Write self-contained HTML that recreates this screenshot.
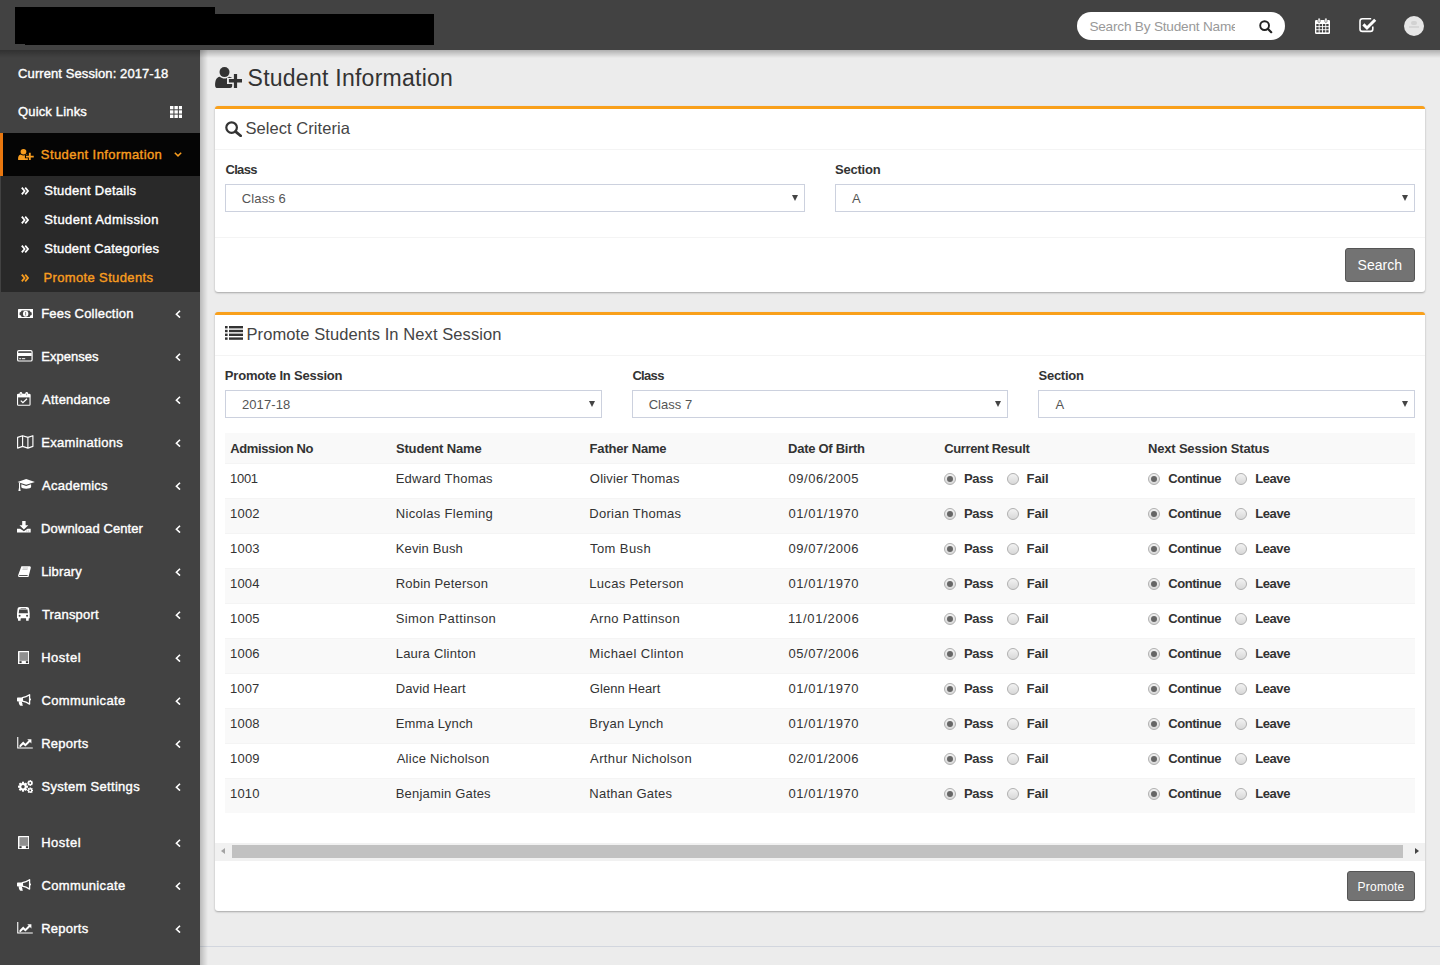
<!DOCTYPE html>
<html lang="en"><head><meta charset="utf-8"><title>Student Information</title>
<style>
*{box-sizing:border-box;margin:0;padding:0}
html,body{width:1440px;height:965px;overflow:hidden}
body{background:#ececec;font-family:"Liberation Sans",sans-serif;font-size:13px;color:#444;position:relative}
.abs{position:absolute}
#hdr{left:0;top:0;width:1440px;height:50px;background:#424242;z-index:5}
#hsh{left:0;top:50px;width:1440px;height:7.6px;background:linear-gradient(to bottom,rgba(0,0,0,.26),rgba(0,0,0,.13) 50%,rgba(0,0,0,0));z-index:6}
#side{left:0;top:50px;width:200px;height:915px;background:#424242;z-index:4}
#ssh{left:200px;top:50px;width:8.4px;height:915px;background:linear-gradient(to right,rgba(0,0,0,.21),rgba(0,0,0,.1) 50%,rgba(0,0,0,0));z-index:4}
.red{background:#000}
.st{color:#fff;font-weight:normal;-webkit-text-stroke:0.38px;font-size:13px;white-space:nowrap;line-height:16px}
.ic{position:absolute;left:18px}
.ic svg{position:absolute;left:0}
.box{background:#fff;border-top:3px solid #f9a01b;border-radius:3px;box-shadow:0 1px 2px rgba(0,0,0,.3)}
.bt{font-size:16.5px;color:#444;white-space:nowrap;line-height:22px}
.lbl{font-weight:bold;font-size:13px;color:#333;white-space:nowrap;line-height:16px}
.sel{height:28px;border:1px solid #ccd1de;background:#fff}
.sel span{position:absolute;font-size:13px;color:#555;line-height:16px;white-space:nowrap}
.sel i{position:absolute;right:6px;top:10px;width:0;height:0;border-left:3px solid transparent;border-right:3px solid transparent;border-top:6px solid #444}
.btn{background:#737373;border:1px solid #555;border-radius:3px;color:#fff;white-space:nowrap}
.btn span{position:absolute;white-space:nowrap}
.row{left:225px;width:1190px;height:35px}
.c{position:absolute;font-size:13px;line-height:16px;color:#333;white-space:nowrap}
.b{font-weight:bold}
.rd{position:absolute;top:9px;width:12px;height:12px;border-radius:50%;border:1px solid #b0b0b0;background:linear-gradient(#f2f2f2,#d8d8d8)}
.rd.on:after{content:"";position:absolute;left:2px;top:2px;width:6px;height:6px;border-radius:50%;background:#666}
</style></head><body>

<div id="hdr" class="abs">
<div class="abs red" style="left:15px;top:7px;width:200px;height:37px"></div><div class="abs red" style="left:25px;top:14px;width:409px;height:31px"></div>
<div class="abs" style="left:1077px;top:12px;width:208px;height:28px;border-radius:14px;background:#fff"><div class="abs" style="left:0;top:0;width:158px;height:28px;overflow:hidden"><span id="t1" class="abs" style="left:12.4px;top:7px;font-size:13.6px;letter-spacing:-0.2px;line-height:16px;color:#999;white-space:nowrap;">Search By Student Name</span></div><svg class="abs" style="left:182px;top:8px" width="14" height="14" viewBox="0 0 14 14"><circle cx="5.6" cy="5.6" r="4.4" fill="none" stroke="#222" stroke-width="1.9"/><path d="M8.8 8.8 L12.2 12.2" stroke="#222" stroke-width="2.2" stroke-linecap="round"/></svg></div>
<svg class="abs" style="left:1315px;top:18px" width="15" height="16" viewBox="0 0 15 16"><rect x="0" y="2" width="15" height="14" rx="1.2" fill="#fff"/><rect x="3" y="0" width="2.2" height="4.4" rx="1" fill="#fff" stroke="#424242" stroke-width=".6"/><rect x="9.8" y="0" width="2.2" height="4.4" rx="1" fill="#fff" stroke="#424242" stroke-width=".6"/><g fill="#424242"><rect x="1.3" y="6" width="2.4" height="2.2"/><rect x="4.6" y="6" width="2.4" height="2.2"/><rect x="7.9" y="6" width="2.4" height="2.2"/><rect x="11.2" y="6" width="2.4" height="2.2"/><rect x="1.3" y="9.1" width="2.4" height="2.2"/><rect x="4.6" y="9.1" width="2.4" height="2.2"/><rect x="7.9" y="9.1" width="2.4" height="2.2"/><rect x="11.2" y="9.1" width="2.4" height="2.2"/><rect x="1.3" y="12.2" width="2.4" height="2.2"/><rect x="4.6" y="12.2" width="2.4" height="2.2"/><rect x="7.9" y="12.2" width="2.4" height="2.2"/><rect x="11.2" y="12.2" width="2.4" height="2.2"/></g></svg>
<svg class="abs" style="left:1359px;top:17.4px" width="18" height="16" viewBox="0 0 18 16"><path d="M12.2 1.8 H3.4 C2 1.8 1 2.8 1 4.2 V12 C1 13.4 2 14.4 3.4 14.4 H11.4 C12.8 14.4 13.8 13.4 13.8 12 V9.6" fill="none" stroke="#fff" stroke-width="1.6"/><path d="M4.4 7.4 L8 11 L16.2 2.8" fill="none" stroke="#fff" stroke-width="3"/></svg>
<div class="abs" style="left:1404px;top:16px;width:20px;height:20px;border-radius:50%;background:#e6e6e6"><div class="abs" style="left:7px;top:5px;width:6px;height:4px;background:#d2d2d2;border-radius:2px"></div><div class="abs" style="left:5px;top:10px;width:10px;height:2px;background:#d6d6d6"></div></div>
</div>
<div id="hsh" class="abs"></div><div id="ssh" class="abs"></div>
<div id="side" class="abs">
<div id="t2" class="abs st" style="left:18px;top:16px;letter-spacing:0.092px;margin-left:0.09px;">Current Session: 2017-18</div>
<div id="t3" class="abs st" style="left:18px;top:54px;letter-spacing:0.160px;">Quick Links</div>
<svg class="abs" style="left:170px;top:56px" width="12.4" height="12" viewBox="0 0 12 12" preserveAspectRatio="none"><g fill="#fff"><rect x="0" y="0" width="3.3" height="3.3"/><rect x="4.3" y="0" width="3.3" height="3.3"/><rect x="8.6" y="0" width="3.4" height="3.3"/><rect x="0" y="4.3" width="3.3" height="3.3"/><rect x="4.3" y="4.3" width="3.3" height="3.3"/><rect x="8.6" y="4.3" width="3.4" height="3.3"/><rect x="0" y="8.6" width="3.3" height="3.4"/><rect x="4.3" y="8.6" width="3.3" height="3.4"/><rect x="8.6" y="8.6" width="3.4" height="3.4"/></g></svg>
<div class="abs" style="left:0;top:83px;width:200px;height:43px;background:#050505;border-left:3px solid #e8770f"></div>
<div class="abs" style="left:1px;top:126px;width:199px;height:116px;background:#292929"></div>
<svg class="abs" style="left:17.9px;top:98.6px" width="15.8" height="11.6" viewBox="0 0 27.4 21" preserveAspectRatio="none"><path d="M2.6 21 C1 21 0.1 20 0.1 18.4 C0.1 14 1.2 10.2 4.8 9.8 C7.6 12.2 11.4 12.2 14.2 9.8 C15.4 9.9 16.4 10.3 17.2 11 H12 V16.9 H17.2 V19 C17.2 20.2 16.4 21 15.2 21 Z" fill="#f89d1f"/><circle cx="9.5" cy="5.1" r="5" fill="#f89d1f" stroke="BGC" stroke-width="0"/><path d="M18.9 7 H22.1 V12 H27.3 V15.5 H22.1 V21 H18.9 V15.5 H13.9 V12 H18.9 Z" fill="#f89d1f"/></svg>
<div id="t4" class="abs st" style="left:41.5px;top:97px;color:#f89d1f;letter-spacing:0.420px;margin-left:-0.70px;">Student Information</div>
<svg class="abs" style="left:174px;top:102px" width="8" height="5.2" viewBox="0 0 9 6"><path d="M0.8 0.8 L4.5 4.5 L8.2 0.8" fill="none" stroke="#f89d1f" stroke-width="1.7"/></svg>
<svg class="abs" style="left:20.5px;top:137px" width="8" height="8" viewBox="0 0 8 8"><path d="M0.8 0.6 L3.6 4 L0.8 7.4 M4.2 0.6 L7 4 L4.2 7.4" fill="none" stroke="#fff" stroke-width="1.75"/></svg>
<div id="t5" class="abs st" style="left:44.4px;top:133px;color:#fff;letter-spacing:0.258px;margin-left:-0.10px;">Student Details</div>
<svg class="abs" style="left:20.5px;top:166px" width="8" height="8" viewBox="0 0 8 8"><path d="M0.8 0.6 L3.6 4 L0.8 7.4 M4.2 0.6 L7 4 L4.2 7.4" fill="none" stroke="#fff" stroke-width="1.75"/></svg>
<div id="t6" class="abs st" style="left:44.4px;top:162px;color:#fff;letter-spacing:0.405px;margin-left:-0.10px;">Student Admission</div>
<svg class="abs" style="left:20.5px;top:195px" width="8" height="8" viewBox="0 0 8 8"><path d="M0.8 0.6 L3.6 4 L0.8 7.4 M4.2 0.6 L7 4 L4.2 7.4" fill="none" stroke="#fff" stroke-width="1.75"/></svg>
<div id="t7" class="abs st" style="left:44.4px;top:191px;color:#fff;letter-spacing:0.195px;margin-left:-0.10px;">Student Categories</div>
<svg class="abs" style="left:20.5px;top:224px" width="8" height="8" viewBox="0 0 8 8"><path d="M0.8 0.6 L3.6 4 L0.8 7.4 M4.2 0.6 L7 4 L4.2 7.4" fill="none" stroke="#f89d1f" stroke-width="1.75"/></svg>
<div id="t8" class="abs st" style="left:44.4px;top:220px;color:#f89d1f;letter-spacing:0.365px;margin-left:-0.96px;">Promote Students</div>
<svg class="abs" style="left:17.5px;top:258.7px" width="15.30" height="9.40" viewBox="0 0 15.3 9.4" preserveAspectRatio="none"><rect x="0" y="0" width="15.3" height="9.4" rx="0.6" fill="#fff"/><path d="M3.6 1.5 H11.7 C11.9 2.6 12.7 3.3 13.7 3.4 V6 C12.7 6.1 11.9 6.8 11.7 7.9 H3.6 C3.4 6.8 2.6 6.1 1.6 6 V3.4 C2.6 3.3 3.4 2.6 3.6 1.5 Z" fill="#424242"/><ellipse cx="7.65" cy="4.7" rx="2.7" ry="3" fill="#fff"/><rect x="7.2" y="3" width="0.9" height="3.4" fill="#777"/></svg>
<div id="t9" class="abs st" style="left:41.5px;top:256px;letter-spacing:0.184px;margin-left:-0.32px;">Fees Collection</div>
<svg class="abs" style="left:175px;top:259.5px" width="6" height="8.4" viewBox="0 0 6 9" preserveAspectRatio="none"><path d="M5 0.8 L1.4 4.5 L5 8.2" fill="none" stroke="#fff" stroke-width="1.6"/></svg>
<svg class="abs" style="left:17.4px;top:300.4px" width="15.70" height="11.60" viewBox="0 0 15.7 11.6" preserveAspectRatio="none"><rect x="0.6" y="0.6" width="14.5" height="10.4" rx="1.3" fill="none" stroke="#fff" stroke-width="1.2"/><rect x="1" y="2.9" width="13.7" height="3.1" fill="#fff"/><rect x="2.2" y="8.2" width="2" height="1" fill="#fff"/><rect x="5" y="8.2" width="3.2" height="1" fill="#fff"/></svg>
<div id="t10" class="abs st" style="left:41.5px;top:299px;letter-spacing:0.037px;margin-left:-0.32px;">Expenses</div>
<svg class="abs" style="left:175px;top:302.5px" width="6" height="8.4" viewBox="0 0 6 9" preserveAspectRatio="none"><path d="M5 0.8 L1.4 4.5 L5 8.2" fill="none" stroke="#fff" stroke-width="1.6"/></svg>
<svg class="abs" style="left:17.4px;top:342.2px" width="13.60" height="13.90" viewBox="0 0 13.6 13.9" preserveAspectRatio="none"><rect x="0.55" y="2.4" width="12.5" height="10.9" rx="0.8" fill="none" stroke="#fff" stroke-width="1.1"/><rect x="0.4" y="2.2" width="12.8" height="3.2" fill="#fff"/><rect x="2.6" y="0" width="2.6" height="4" rx="1.2" fill="#fff"/><rect x="8.4" y="0" width="2.6" height="4" rx="1.2" fill="#fff"/><rect x="3.5" y="1.4" width="0.8" height="2" rx="0.4" fill="#888"/><rect x="9.3" y="1.4" width="0.8" height="2" rx="0.4" fill="#888"/><path d="M3.8 8.6 L5.9 10.7 L10 6.8" fill="none" stroke="#fff" stroke-width="1.3"/></svg>
<div id="t11" class="abs st" style="left:41.5px;top:342px;letter-spacing:0.243px;margin-left:0.52px;">Attendance</div>
<svg class="abs" style="left:175px;top:345.5px" width="6" height="8.4" viewBox="0 0 6 9" preserveAspectRatio="none"><path d="M5 0.8 L1.4 4.5 L5 8.2" fill="none" stroke="#fff" stroke-width="1.6"/></svg>
<svg class="abs" style="left:17.3px;top:385.4px" width="16.50" height="13.80" viewBox="0 0 16.5 13.8" preserveAspectRatio="none"><path d="M0.6 2.4 L5.6 0.7 L10.9 2.4 L15.9 0.7 L15.9 11.4 L10.9 13.1 L5.6 11.4 L0.6 13.1 Z M5.6 0.7 V11.4 M10.9 2.4 V13.1" fill="none" stroke="#fff" stroke-width="1.15" stroke-linejoin="round"/></svg>
<div id="t12" class="abs st" style="left:41.5px;top:385px;letter-spacing:0.331px;margin-left:-0.32px;">Examinations</div>
<svg class="abs" style="left:175px;top:388.5px" width="6" height="8.4" viewBox="0 0 6 9" preserveAspectRatio="none"><path d="M5 0.8 L1.4 4.5 L5 8.2" fill="none" stroke="#fff" stroke-width="1.6"/></svg>
<svg class="abs" style="left:17.3px;top:429px" width="17.90" height="12.00" viewBox="0 0 17.9 12" preserveAspectRatio="none"><path d="M9.2 0 L17.9 2.9 L9.2 5.8 L0.5 2.9 Z" fill="#fff"/><path d="M4.3 5.2 L9.2 6.9 L14.1 5.2 V8 C14.1 10.2 4.3 10.2 4.3 8 Z" fill="#fff"/><path d="M2 3.6 L3.1 4 V8.4 L3.6 12 H1.4 L2 8.4 Z" fill="#fff"/></svg>
<div id="t13" class="abs st" style="left:41.5px;top:428px;letter-spacing:0.251px;margin-left:0.52px;">Academics</div>
<svg class="abs" style="left:175px;top:431.5px" width="6" height="8.4" viewBox="0 0 6 9" preserveAspectRatio="none"><path d="M5 0.8 L1.4 4.5 L5 8.2" fill="none" stroke="#fff" stroke-width="1.6"/></svg>
<svg class="abs" style="left:17.3px;top:471.3px" width="13.70" height="11.60" viewBox="0 0 13.7 11.6" preserveAspectRatio="none"><path d="M5.2 0 H8.6 V4.2 H11.3 L6.9 8.6 L2.5 4.2 H5.2 Z" fill="#fff"/><path d="M0 7.8 H3.2 L6.9 10.2 L10.5 7.8 H13.7 V11.6 H0 Z" fill="#fff"/><rect x="9.4" y="9.6" width="0.9" height="0.9" fill="#999"/><rect x="11.2" y="9.6" width="0.9" height="0.9" fill="#999"/></svg>
<div id="t14" class="abs st" style="left:41.5px;top:471px;letter-spacing:0.099px;margin-left:-0.40px;">Download Center</div>
<svg class="abs" style="left:175px;top:474.5px" width="6" height="8.4" viewBox="0 0 6 9" preserveAspectRatio="none"><path d="M5 0.8 L1.4 4.5 L5 8.2" fill="none" stroke="#fff" stroke-width="1.6"/></svg>
<svg class="abs" style="left:17.6px;top:515.7px" width="13.40" height="11.30" viewBox="0 0 13.4 11.3" preserveAspectRatio="none"><path d="M3.4 0.2 H12.2 L12.9 1.4 L10.6 10.6 C10.5 11 10.2 11.2 9.8 11.2 H1.6 C0.2 11.2 -0.2 9.8 0.4 8.6 Z" fill="#fff"/><path d="M4.8 2 H10 M4.4 3.4 H9.6" stroke="#bbb" stroke-width="0.8"/><path d="M1.4 8.9 H9.4 L9.9 9.9 H1.5 C0.9 9.9 0.9 8.9 1.4 8.9 Z" fill="#555"/></svg>
<div id="t15" class="abs st" style="left:41.5px;top:514px;letter-spacing:0.145px;margin-left:-0.32px;">Library</div>
<svg class="abs" style="left:175px;top:517.5px" width="6" height="8.4" viewBox="0 0 6 9" preserveAspectRatio="none"><path d="M5 0.8 L1.4 4.5 L5 8.2" fill="none" stroke="#fff" stroke-width="1.6"/></svg>
<svg class="abs" style="left:17.3px;top:557.3px" width="12.70" height="13.70" viewBox="0 0 12.7 13.7" preserveAspectRatio="none"><path d="M3 0 H9.7 C11.3 0 12 0.8 12.2 2.4 L12.7 6.6 V11.2 H0 V6.6 L0.5 2.4 C0.7 0.8 1.4 0 3 0 Z" fill="#fff"/><rect x="3.4" y="0.9" width="5.9" height="0.8" rx="0.4" fill="#777"/><path d="M2.2 2.6 H10.5 L11 6.3 H1.7 Z" fill="#424242"/><circle cx="2.6" cy="8.8" r="1" fill="#424242"/><circle cx="10.1" cy="8.8" r="1" fill="#424242"/><rect x="1" y="10.8" width="2.6" height="2.9" rx="0.5" fill="#fff"/><rect x="9.1" y="10.8" width="2.6" height="2.9" rx="0.5" fill="#fff"/></svg>
<div id="t16" class="abs st" style="left:41.5px;top:557px;letter-spacing:0.187px;margin-left:0.40px;">Transport</div>
<svg class="abs" style="left:175px;top:560.5px" width="6" height="8.4" viewBox="0 0 6 9" preserveAspectRatio="none"><path d="M5 0.8 L1.4 4.5 L5 8.2" fill="none" stroke="#fff" stroke-width="1.6"/></svg>
<svg class="abs" style="left:17.5px;top:600.7px" width="11.50" height="13.30" viewBox="0 0 11.5 13.3" preserveAspectRatio="none"><rect x="0" y="0" width="11.5" height="13.3" rx="0.6" fill="#fff"/><rect x="1.4" y="1.2" width="8.7" height="8.6" fill="#8f8f8f"/><rect x="1.4" y="10.2" width="2.2" height="1.9" fill="#333"/><rect x="7.9" y="10.2" width="2.2" height="1.9" fill="#333"/></svg>
<div id="t17" class="abs st" style="left:41.5px;top:600px;letter-spacing:0.511px;margin-left:-0.32px;">Hostel</div>
<svg class="abs" style="left:175px;top:603.5px" width="6" height="8.4" viewBox="0 0 6 9" preserveAspectRatio="none"><path d="M5 0.8 L1.4 4.5 L5 8.2" fill="none" stroke="#fff" stroke-width="1.6"/></svg>
<svg class="abs" style="left:17.3px;top:644.4px" width="14.70" height="11.90" viewBox="0 0 14.7 11.9" preserveAspectRatio="none"><path d="M0 4.4 C0 3.8 0.4 3.4 1 3.4 H5.6 V7.4 H1 C0.4 7.4 0 7 0 6.4 Z" fill="#fff"/><path d="M5.4 3.6 C8.2 3.2 10.4 2.2 12.6 0.7 V10.1 C10.4 8.6 8.2 7.6 5.4 7.2 Z" fill="none" stroke="#fff" stroke-width="1.3" stroke-linejoin="round"/><path d="M13 4.2 C14.4 4.4 14.4 6.4 13 6.6 Z" fill="#fff"/><path d="M1.8 7.2 H5.2 C4.8 8.2 5 9 5.6 9.6 C5.2 10.2 5.4 10.8 6 11.4 C5.2 12 3.8 12 3 11.6 C2 10.2 1.6 8.8 1.8 7.2 Z" fill="#fff"/></svg>
<div id="t18" class="abs st" style="left:41.5px;top:643px;letter-spacing:0.345px;margin-left:0.02px;">Communicate</div>
<svg class="abs" style="left:175px;top:646.5px" width="6" height="8.4" viewBox="0 0 6 9" preserveAspectRatio="none"><path d="M5 0.8 L1.4 4.5 L5 8.2" fill="none" stroke="#fff" stroke-width="1.6"/></svg>
<svg class="abs" style="left:17.3px;top:687.4px" width="15.80" height="11.60" viewBox="0 0 15.8 11.6" preserveAspectRatio="none"><path d="M0.2 0 H1.3 V10.5 H15.8 V11.6 H0.2 Z" fill="#fff"/><path d="M2.5 8.3 L6.2 4.6 L8.4 6.8 L11.6 3.6 L10.2 2.2 H14.4 V6.4 L13 5 L8.4 9.6 L6.2 7.4 L3.4 10.2 H2.5 Z" fill="#fff"/></svg>
<div id="t19" class="abs st" style="left:41.5px;top:686px;letter-spacing:0.247px;margin-left:-0.32px;">Reports</div>
<svg class="abs" style="left:175px;top:689.5px" width="6" height="8.4" viewBox="0 0 6 9" preserveAspectRatio="none"><path d="M5 0.8 L1.4 4.5 L5 8.2" fill="none" stroke="#fff" stroke-width="1.6"/></svg>
<svg class="abs" style="left:17.6px;top:729.6px" width="15.20" height="13.40" viewBox="0 0 15.2 13.4" preserveAspectRatio="none"><circle cx="5" cy="6.7" r="3.70" fill="#fff"/><rect x="3.95" y="1.70" width="2.1" height="10.00" fill="#fff" transform="rotate(0.0 5 6.7)"/><rect x="3.95" y="1.70" width="2.1" height="10.00" fill="#fff" transform="rotate(45.0 5 6.7)"/><rect x="3.95" y="1.70" width="2.1" height="10.00" fill="#fff" transform="rotate(90.0 5 6.7)"/><rect x="3.95" y="1.70" width="2.1" height="10.00" fill="#fff" transform="rotate(135.0 5 6.7)"/><circle cx="5" cy="6.7" r="1.7" fill="#424242"/><circle cx="12.2" cy="3" r="2.22" fill="#fff"/><rect x="11.55" y="0.00" width="1.3" height="6.00" fill="#fff" transform="rotate(0.0 12.2 3)"/><rect x="11.55" y="0.00" width="1.3" height="6.00" fill="#fff" transform="rotate(45.0 12.2 3)"/><rect x="11.55" y="0.00" width="1.3" height="6.00" fill="#fff" transform="rotate(90.0 12.2 3)"/><rect x="11.55" y="0.00" width="1.3" height="6.00" fill="#fff" transform="rotate(135.0 12.2 3)"/><circle cx="12.2" cy="3" r="0.9" fill="#424242"/><circle cx="12.2" cy="10.4" r="2.22" fill="#fff"/><rect x="11.55" y="7.40" width="1.3" height="6.00" fill="#fff" transform="rotate(0.0 12.2 10.4)"/><rect x="11.55" y="7.40" width="1.3" height="6.00" fill="#fff" transform="rotate(45.0 12.2 10.4)"/><rect x="11.55" y="7.40" width="1.3" height="6.00" fill="#fff" transform="rotate(90.0 12.2 10.4)"/><rect x="11.55" y="7.40" width="1.3" height="6.00" fill="#fff" transform="rotate(135.0 12.2 10.4)"/><circle cx="12.2" cy="10.4" r="0.9" fill="#424242"/></svg>
<div id="t20" class="abs st" style="left:41.5px;top:729px;letter-spacing:0.309px;margin-left:-0.10px;">System Settings</div>
<svg class="abs" style="left:175px;top:732.5px" width="6" height="8.4" viewBox="0 0 6 9" preserveAspectRatio="none"><path d="M5 0.8 L1.4 4.5 L5 8.2" fill="none" stroke="#fff" stroke-width="1.6"/></svg>
<svg class="abs" style="left:17.5px;top:785.7px" width="11.50" height="13.30" viewBox="0 0 11.5 13.3" preserveAspectRatio="none"><rect x="0" y="0" width="11.5" height="13.3" rx="0.6" fill="#fff"/><rect x="1.4" y="1.2" width="8.7" height="8.6" fill="#8f8f8f"/><rect x="1.4" y="10.2" width="2.2" height="1.9" fill="#333"/><rect x="7.9" y="10.2" width="2.2" height="1.9" fill="#333"/></svg>
<div id="t21" class="abs st" style="left:41.5px;top:785px;letter-spacing:0.511px;margin-left:-0.32px;">Hostel</div>
<svg class="abs" style="left:175px;top:788.5px" width="6" height="8.4" viewBox="0 0 6 9" preserveAspectRatio="none"><path d="M5 0.8 L1.4 4.5 L5 8.2" fill="none" stroke="#fff" stroke-width="1.6"/></svg>
<svg class="abs" style="left:17.3px;top:829.4px" width="14.70" height="11.90" viewBox="0 0 14.7 11.9" preserveAspectRatio="none"><path d="M0 4.4 C0 3.8 0.4 3.4 1 3.4 H5.6 V7.4 H1 C0.4 7.4 0 7 0 6.4 Z" fill="#fff"/><path d="M5.4 3.6 C8.2 3.2 10.4 2.2 12.6 0.7 V10.1 C10.4 8.6 8.2 7.6 5.4 7.2 Z" fill="none" stroke="#fff" stroke-width="1.3" stroke-linejoin="round"/><path d="M13 4.2 C14.4 4.4 14.4 6.4 13 6.6 Z" fill="#fff"/><path d="M1.8 7.2 H5.2 C4.8 8.2 5 9 5.6 9.6 C5.2 10.2 5.4 10.8 6 11.4 C5.2 12 3.8 12 3 11.6 C2 10.2 1.6 8.8 1.8 7.2 Z" fill="#fff"/></svg>
<div id="t22" class="abs st" style="left:41.5px;top:828px;letter-spacing:0.345px;margin-left:0.02px;">Communicate</div>
<svg class="abs" style="left:175px;top:831.5px" width="6" height="8.4" viewBox="0 0 6 9" preserveAspectRatio="none"><path d="M5 0.8 L1.4 4.5 L5 8.2" fill="none" stroke="#fff" stroke-width="1.6"/></svg>
<svg class="abs" style="left:17.3px;top:872.4px" width="15.80" height="11.60" viewBox="0 0 15.8 11.6" preserveAspectRatio="none"><path d="M0.2 0 H1.3 V10.5 H15.8 V11.6 H0.2 Z" fill="#fff"/><path d="M2.5 8.3 L6.2 4.6 L8.4 6.8 L11.6 3.6 L10.2 2.2 H14.4 V6.4 L13 5 L8.4 9.6 L6.2 7.4 L3.4 10.2 H2.5 Z" fill="#fff"/></svg>
<div id="t23" class="abs st" style="left:41.5px;top:871px;letter-spacing:0.247px;margin-left:-0.32px;">Reports</div>
<svg class="abs" style="left:175px;top:874.5px" width="6" height="8.4" viewBox="0 0 6 9" preserveAspectRatio="none"><path d="M5 0.8 L1.4 4.5 L5 8.2" fill="none" stroke="#fff" stroke-width="1.6"/></svg>
</div>
<svg class="abs" style="left:215px;top:67px" width="27.4" height="21" viewBox="0 0 27.4 21"><path d="M2.6 21 C1 21 0.1 20 0.1 18.4 C0.1 14 1.2 10.2 4.8 9.8 C7.6 12.2 11.4 12.2 14.2 9.8 C15.4 9.9 16.4 10.3 17.2 11 H12 V16.9 H17.2 V19 C17.2 20.2 16.4 21 15.2 21 Z" fill="#333"/><circle cx="9.5" cy="5.1" r="5" fill="#333" stroke="BGC" stroke-width="0"/><path d="M18.9 7 H22.1 V12 H27.3 V15.5 H22.1 V21 H18.9 V15.5 H13.9 V12 H18.9 Z" fill="#333"/></svg>
<div id="t24" class="abs " style="left:248.3px;top:63px;font-size:23px;line-height:30px;color:#333;white-space:nowrap;letter-spacing:0.256px;margin-left:-0.78px;">Student Information</div>
<div class="abs box" style="left:215px;top:106px;width:1210px;height:186px"></div>
<svg class="abs" style="left:225px;top:121px" width="17.4" height="16" viewBox="0 0 17.4 16"><circle cx="6.6" cy="6.6" r="5.3" fill="none" stroke="#333" stroke-width="2.2"/><path d="M10.6 10.6 L15.6 14.8" stroke="#333" stroke-width="2.8" stroke-linecap="round"/></svg>
<div id="t25" class="abs bt" style="left:246px;top:117px;letter-spacing:0.054px;margin-left:-0.52px;">Select Criteria</div>
<div class="abs" style="left:215px;top:149px;width:1210px;height:1px;background:#f4f4f4"></div>
<div id="t26" class="abs lbl" style="left:225.4px;top:162px;letter-spacing:-0.651px;margin-left:0.00px;">Class</div>
<div id="t27" class="abs lbl" style="left:835.4px;top:162px;letter-spacing:-0.215px;margin-left:-0.40px;">Section</div>
<div class="abs sel" style="left:225px;top:184px;width:580px"><span id="t28" class="" style="left:16.1px;top:6px;letter-spacing:0.108px;margin-left:-0.25px;">Class 6</span><i></i></div>
<div class="abs sel" style="left:835px;top:184px;width:580px"><span id="t29" class="" style="left:16.1px;top:6px;">A</span><i></i></div>
<div class="abs" style="left:215px;top:237px;width:1210px;height:1px;background:#f4f4f4"></div>
<div class="abs btn" style="left:1345px;top:248px;width:70px;height:34px;font-size:14px;line-height:16px"><span id="t30" class="" style="left:12.2px;top:8px;letter-spacing:0.034px;margin-left:-0.58px;">Search</span></div>
<div class="abs box" style="left:215px;top:312px;width:1210px;height:599px"></div>
<svg class="abs" style="left:225px;top:326px" width="18" height="14" viewBox="0 0 18 14"><g fill="#333"><rect x="0" y="0" width="2.6" height="2.4"/><rect x="4" y="0" width="14" height="2.4"/><rect x="0" y="3.8" width="2.6" height="2.4"/><rect x="4" y="3.8" width="14" height="2.4"/><rect x="0" y="7.6" width="2.6" height="2.4"/><rect x="4" y="7.6" width="14" height="2.4"/><rect x="0" y="11.4" width="2.6" height="2.4"/><rect x="4" y="11.4" width="14" height="2.4"/></g></svg>
<div id="t31" class="abs bt" style="left:247.3px;top:323px;letter-spacing:0.089px;margin-left:-0.80px;">Promote Students In Next Session</div>
<div class="abs" style="left:215px;top:355px;width:1210px;height:1px;background:#f4f4f4"></div>
<div id="t32" class="abs lbl" style="left:225.4px;top:368px;letter-spacing:-0.218px;margin-left:-0.54px;">Promote In Session</div>
<div id="t33" class="abs lbl" style="left:632.4px;top:368px;letter-spacing:-0.674px;margin-left:0.00px;">Class</div>
<div id="t34" class="abs lbl" style="left:1038.9px;top:368px;letter-spacing:-0.282px;margin-left:-0.33px;">Section</div>
<div class="abs sel" style="left:225px;top:390px;width:377px"><span id="t35" class="" style="left:16.1px;top:6px;letter-spacing:0.104px;margin-left:-0.18px;">2017-18</span><i></i></div>
<div class="abs sel" style="left:632px;top:390px;width:376px"><span id="t36" class="" style="left:15.9px;top:6px;letter-spacing:0.037px;margin-left:-0.22px;">Class 7</span><i></i></div>
<div class="abs sel" style="left:1038px;top:390px;width:377px"><span id="t37" class="" style="left:16.5px;top:6px;">A</span><i></i></div>
<div class="abs row" style="top:433px;height:30px;background:#f9f9f9">
<span id="t38" class="c b" style="left:5.2px;top:8px;letter-spacing:-0.367px;margin-left:-0.02px;">Admission No</span>
<span id="t39" class="c b" style="left:171.3px;top:8px;letter-spacing:-0.137px;margin-left:-0.43px;">Student Name</span>
<span id="t40" class="c b" style="left:365.0px;top:8px;letter-spacing:-0.173px;margin-left:-0.45px;">Father Name</span>
<span id="t41" class="c b" style="left:563.5px;top:8px;letter-spacing:-0.271px;margin-left:-0.43px;">Date Of Birth</span>
<span id="t42" class="c b" style="left:719.3px;top:8px;letter-spacing:-0.365px;margin-left:-0.10px;">Current Result</span>
<span id="t43" class="c b" style="left:923.5px;top:8px;letter-spacing:-0.197px;margin-left:-0.43px;">Next Session Status</span>
</div>
<div class="abs row" style="top:463px;background:#fff;border-top:1px solid #f4f4f4">
<span id="t44" class="c" style="left:5.5px;top:7px;letter-spacing:-0.276px;margin-left:-0.53px;">1001</span>
<span id="t45" class="c" style="left:171.3px;top:7px;letter-spacing:0.206px;margin-left:-0.59px;">Edward Thomas</span>
<span id="t46" class="c" style="left:365.0px;top:7px;letter-spacing:0.187px;margin-left:-0.15px;">Olivier Thomas</span>
<span id="t47" class="c" style="left:563.5px;top:7px;letter-spacing:0.568px;margin-left:-0.11px;">09/06/2005</span>
<i class="rd on" style="left:719px"></i><span id="t48" class="c b" style="left:739.3px;top:7px;letter-spacing:-0.238px;margin-left:-0.41px;">Pass</span><i class="rd" style="left:782px"></i><span id="t49" class="c b" style="left:802.1px;top:7px;letter-spacing:-0.171px;margin-left:-0.49px;">Fail</span>
<i class="rd on" style="left:923px"></i><span id="t50" class="c b" style="left:943.3px;top:7px;letter-spacing:-0.424px;margin-left:-0.09px;">Continue</span><i class="rd" style="left:1010px"></i><span id="t51" class="c b" style="left:1030.8px;top:7px;letter-spacing:-0.432px;margin-left:-0.54px;">Leave</span>
</div>
<div class="abs row" style="top:498px;background:#f9f9f9;border-top:1px solid #f4f4f4">
<span id="t52" class="c" style="left:5.5px;top:7px;letter-spacing:0.225px;margin-left:-0.53px;">1002</span>
<span id="t53" class="c" style="left:171.3px;top:7px;letter-spacing:0.330px;margin-left:-0.59px;">Nicolas Fleming</span>
<span id="t54" class="c" style="left:365.0px;top:7px;letter-spacing:0.252px;margin-left:-0.68px;">Dorian Thomas</span>
<span id="t55" class="c" style="left:563.5px;top:7px;letter-spacing:0.559px;margin-left:-0.12px;">01/01/1970</span>
<i class="rd on" style="left:719px"></i><span id="t56" class="c b" style="left:739.3px;top:7px;letter-spacing:-0.271px;margin-left:-0.40px;">Pass</span><i class="rd" style="left:782px"></i><span id="t57" class="c b" style="left:802.1px;top:7px;letter-spacing:-0.178px;margin-left:-0.47px;">Fail</span>
<i class="rd on" style="left:923px"></i><span id="t58" class="c b" style="left:943.3px;top:7px;letter-spacing:-0.421px;margin-left:-0.10px;">Continue</span><i class="rd" style="left:1010px"></i><span id="t59" class="c b" style="left:1030.8px;top:7px;letter-spacing:-0.434px;margin-left:-0.53px;">Leave</span>
</div>
<div class="abs row" style="top:533px;background:#fff;border-top:1px solid #f4f4f4">
<span id="t60" class="c" style="left:5.5px;top:7px;letter-spacing:0.223px;margin-left:-0.53px;">1003</span>
<span id="t61" class="c" style="left:171.3px;top:7px;letter-spacing:0.150px;margin-left:-0.59px;">Kevin Bush</span>
<span id="t62" class="c" style="left:365.0px;top:7px;letter-spacing:0.412px;">Tom Bush</span>
<span id="t63" class="c" style="left:563.5px;top:7px;letter-spacing:0.572px;margin-left:-0.11px;">09/07/2006</span>
<i class="rd on" style="left:719px"></i><span id="t64" class="c b" style="left:739.3px;top:7px;letter-spacing:-0.238px;margin-left:-0.41px;">Pass</span><i class="rd" style="left:782px"></i><span id="t65" class="c b" style="left:802.1px;top:7px;letter-spacing:-0.171px;margin-left:-0.49px;">Fail</span>
<i class="rd on" style="left:923px"></i><span id="t66" class="c b" style="left:943.3px;top:7px;letter-spacing:-0.424px;margin-left:-0.09px;">Continue</span><i class="rd" style="left:1010px"></i><span id="t67" class="c b" style="left:1030.8px;top:7px;letter-spacing:-0.432px;margin-left:-0.54px;">Leave</span>
</div>
<div class="abs row" style="top:568px;background:#f9f9f9;border-top:1px solid #f4f4f4">
<span id="t68" class="c" style="left:5.5px;top:7px;letter-spacing:0.177px;margin-left:-0.53px;">1004</span>
<span id="t69" class="c" style="left:171.3px;top:7px;letter-spacing:0.198px;margin-left:-0.59px;">Robin Peterson</span>
<span id="t70" class="c" style="left:365.0px;top:7px;letter-spacing:0.292px;margin-left:-0.68px;">Lucas Peterson</span>
<span id="t71" class="c" style="left:563.5px;top:7px;letter-spacing:0.559px;margin-left:-0.12px;">01/01/1970</span>
<i class="rd on" style="left:719px"></i><span id="t72" class="c b" style="left:739.3px;top:7px;letter-spacing:-0.271px;margin-left:-0.40px;">Pass</span><i class="rd" style="left:782px"></i><span id="t73" class="c b" style="left:802.1px;top:7px;letter-spacing:-0.178px;margin-left:-0.47px;">Fail</span>
<i class="rd on" style="left:923px"></i><span id="t74" class="c b" style="left:943.3px;top:7px;letter-spacing:-0.421px;margin-left:-0.10px;">Continue</span><i class="rd" style="left:1010px"></i><span id="t75" class="c b" style="left:1030.8px;top:7px;letter-spacing:-0.434px;margin-left:-0.53px;">Leave</span>
</div>
<div class="abs row" style="top:603px;background:#fff;border-top:1px solid #f4f4f4">
<span id="t76" class="c" style="left:5.5px;top:7px;letter-spacing:0.223px;margin-left:-0.53px;">1005</span>
<span id="t77" class="c" style="left:171.3px;top:7px;letter-spacing:0.381px;margin-left:-0.55px;">Simon Pattinson</span>
<span id="t78" class="c" style="left:365.0px;top:7px;letter-spacing:0.328px;margin-left:0.12px;">Arno Pattinson</span>
<span id="t79" class="c" style="left:563.5px;top:7px;letter-spacing:0.725px;margin-left:-0.53px;">11/01/2006</span>
<i class="rd on" style="left:719px"></i><span id="t80" class="c b" style="left:739.3px;top:7px;letter-spacing:-0.238px;margin-left:-0.41px;">Pass</span><i class="rd" style="left:782px"></i><span id="t81" class="c b" style="left:802.1px;top:7px;letter-spacing:-0.171px;margin-left:-0.49px;">Fail</span>
<i class="rd on" style="left:923px"></i><span id="t82" class="c b" style="left:943.3px;top:7px;letter-spacing:-0.424px;margin-left:-0.09px;">Continue</span><i class="rd" style="left:1010px"></i><span id="t83" class="c b" style="left:1030.8px;top:7px;letter-spacing:-0.432px;margin-left:-0.54px;">Leave</span>
</div>
<div class="abs row" style="top:638px;background:#f9f9f9;border-top:1px solid #f4f4f4">
<span id="t84" class="c" style="left:5.5px;top:7px;letter-spacing:0.225px;margin-left:-0.53px;">1006</span>
<span id="t85" class="c" style="left:171.3px;top:7px;letter-spacing:0.217px;margin-left:-0.59px;">Laura Clinton</span>
<span id="t86" class="c" style="left:365.0px;top:7px;letter-spacing:0.370px;margin-left:-0.68px;">Michael Clinton</span>
<span id="t87" class="c" style="left:563.5px;top:7px;letter-spacing:0.573px;margin-left:-0.12px;">05/07/2006</span>
<i class="rd on" style="left:719px"></i><span id="t88" class="c b" style="left:739.3px;top:7px;letter-spacing:-0.271px;margin-left:-0.40px;">Pass</span><i class="rd" style="left:782px"></i><span id="t89" class="c b" style="left:802.1px;top:7px;letter-spacing:-0.178px;margin-left:-0.47px;">Fail</span>
<i class="rd on" style="left:923px"></i><span id="t90" class="c b" style="left:943.3px;top:7px;letter-spacing:-0.421px;margin-left:-0.10px;">Continue</span><i class="rd" style="left:1010px"></i><span id="t91" class="c b" style="left:1030.8px;top:7px;letter-spacing:-0.434px;margin-left:-0.53px;">Leave</span>
</div>
<div class="abs row" style="top:673px;background:#fff;border-top:1px solid #f4f4f4">
<span id="t92" class="c" style="left:5.5px;top:7px;letter-spacing:0.145px;margin-left:-0.53px;">1007</span>
<span id="t93" class="c" style="left:171.3px;top:7px;letter-spacing:0.123px;margin-left:-0.59px;">David Heart</span>
<span id="t94" class="c" style="left:365.0px;top:7px;letter-spacing:0.038px;margin-left:-0.19px;">Glenn Heart</span>
<span id="t95" class="c" style="left:563.5px;top:7px;letter-spacing:0.557px;margin-left:-0.11px;">01/01/1970</span>
<i class="rd on" style="left:719px"></i><span id="t96" class="c b" style="left:739.3px;top:7px;letter-spacing:-0.238px;margin-left:-0.41px;">Pass</span><i class="rd" style="left:782px"></i><span id="t97" class="c b" style="left:802.1px;top:7px;letter-spacing:-0.171px;margin-left:-0.49px;">Fail</span>
<i class="rd on" style="left:923px"></i><span id="t98" class="c b" style="left:943.3px;top:7px;letter-spacing:-0.424px;margin-left:-0.09px;">Continue</span><i class="rd" style="left:1010px"></i><span id="t99" class="c b" style="left:1030.8px;top:7px;letter-spacing:-0.432px;margin-left:-0.54px;">Leave</span>
</div>
<div class="abs row" style="top:708px;background:#f9f9f9;border-top:1px solid #f4f4f4">
<span id="t100" class="c" style="left:5.5px;top:7px;letter-spacing:0.219px;margin-left:-0.53px;">1008</span>
<span id="t101" class="c" style="left:171.3px;top:7px;letter-spacing:0.193px;margin-left:-0.59px;">Emma Lynch</span>
<span id="t102" class="c" style="left:365.0px;top:7px;letter-spacing:0.214px;margin-left:-0.68px;">Bryan Lynch</span>
<span id="t103" class="c" style="left:563.5px;top:7px;letter-spacing:0.559px;margin-left:-0.12px;">01/01/1970</span>
<i class="rd on" style="left:719px"></i><span id="t104" class="c b" style="left:739.3px;top:7px;letter-spacing:-0.271px;margin-left:-0.40px;">Pass</span><i class="rd" style="left:782px"></i><span id="t105" class="c b" style="left:802.1px;top:7px;letter-spacing:-0.178px;margin-left:-0.47px;">Fail</span>
<i class="rd on" style="left:923px"></i><span id="t106" class="c b" style="left:943.3px;top:7px;letter-spacing:-0.421px;margin-left:-0.10px;">Continue</span><i class="rd" style="left:1010px"></i><span id="t107" class="c b" style="left:1030.8px;top:7px;letter-spacing:-0.434px;margin-left:-0.53px;">Leave</span>
</div>
<div class="abs row" style="top:743px;background:#fff;border-top:1px solid #f4f4f4">
<span id="t108" class="c" style="left:5.5px;top:7px;letter-spacing:0.226px;margin-left:-0.53px;">1009</span>
<span id="t109" class="c" style="left:171.3px;top:7px;letter-spacing:0.273px;margin-left:0.33px;">Alice Nicholson</span>
<span id="t110" class="c" style="left:365.0px;top:7px;letter-spacing:0.364px;margin-left:0.12px;">Arthur Nicholson</span>
<span id="t111" class="c" style="left:563.5px;top:7px;letter-spacing:0.572px;margin-left:-0.11px;">02/01/2006</span>
<i class="rd on" style="left:719px"></i><span id="t112" class="c b" style="left:739.3px;top:7px;letter-spacing:-0.238px;margin-left:-0.41px;">Pass</span><i class="rd" style="left:782px"></i><span id="t113" class="c b" style="left:802.1px;top:7px;letter-spacing:-0.171px;margin-left:-0.49px;">Fail</span>
<i class="rd on" style="left:923px"></i><span id="t114" class="c b" style="left:943.3px;top:7px;letter-spacing:-0.424px;margin-left:-0.09px;">Continue</span><i class="rd" style="left:1010px"></i><span id="t115" class="c b" style="left:1030.8px;top:7px;letter-spacing:-0.432px;margin-left:-0.54px;">Leave</span>
</div>
<div class="abs row" style="top:778px;background:#f9f9f9;border-top:1px solid #f4f4f4">
<span id="t116" class="c" style="left:5.5px;top:7px;letter-spacing:0.208px;margin-left:-0.53px;">1010</span>
<span id="t117" class="c" style="left:171.3px;top:7px;letter-spacing:0.185px;margin-left:-0.59px;">Benjamin Gates</span>
<span id="t118" class="c" style="left:365.0px;top:7px;letter-spacing:0.222px;margin-left:-0.68px;">Nathan Gates</span>
<span id="t119" class="c" style="left:563.5px;top:7px;letter-spacing:0.559px;margin-left:-0.12px;">01/01/1970</span>
<i class="rd on" style="left:719px"></i><span id="t120" class="c b" style="left:739.3px;top:7px;letter-spacing:-0.271px;margin-left:-0.40px;">Pass</span><i class="rd" style="left:782px"></i><span id="t121" class="c b" style="left:802.1px;top:7px;letter-spacing:-0.178px;margin-left:-0.47px;">Fail</span>
<i class="rd on" style="left:923px"></i><span id="t122" class="c b" style="left:943.3px;top:7px;letter-spacing:-0.421px;margin-left:-0.10px;">Continue</span><i class="rd" style="left:1010px"></i><span id="t123" class="c b" style="left:1030.8px;top:7px;letter-spacing:-0.434px;margin-left:-0.53px;">Leave</span>
</div>
<div class="abs" style="left:215px;top:843px;width:1210px;height:17.5px;background:#f1f1f1"></div>
<div class="abs" style="left:232px;top:845px;width:1171px;height:13px;background:#c1c1c1"></div>
<div class="abs" style="left:220.7px;top:847.7px;width:0;height:0;border-top:3.75px solid transparent;border-bottom:3.75px solid transparent;border-right:4.5px solid #a3a3a3"></div>
<div class="abs" style="left:1415px;top:848px;width:0;height:0;border-top:3.5px solid transparent;border-bottom:3.5px solid transparent;border-left:4px solid #444"></div>
<div class="abs btn" style="left:1347px;top:871px;width:68px;height:30px;font-size:12px;line-height:14px"><span id="t124" class="" style="left:10.1px;top:8px;letter-spacing:0.216px;margin-left:-0.49px;">Promote</span></div>
<div class="abs" style="left:200px;top:946px;width:1240px;height:1px;background:#d2d6de"></div>
</body></html>
